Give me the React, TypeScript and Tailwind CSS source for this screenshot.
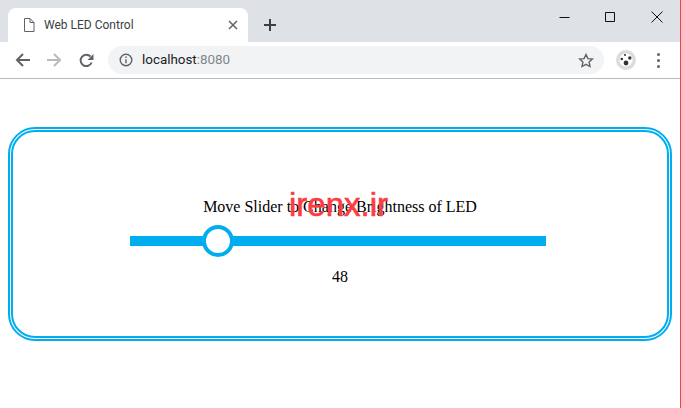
import { useState } from 'react'

function TabStrip() {
  return (
    <div className="flex h-[42px] items-end bg-[#dee1e6] pl-2">
      <div className="relative flex h-[34px] w-[240px] items-center rounded-t-[8px] bg-white pl-[15px] pr-[10px]">
        <svg width="12" height="14" viewBox="0 0 12 14" fill="none" stroke="#5f6368" strokeWidth="1">
          <path d="M1.500 .5h5.500l4 4v9h-9.500z M7 .5v4h4" />
        </svg>
        <span className="ml-[9px] flex-1 font-['Roboto',sans-serif] text-[12px] text-[#3c4043]">Web LED Control</span>
        <svg width="10" height="10" viewBox="0 0 10 10" stroke="#5f6368" strokeWidth="1.500">
          <path d="M1 1l8 8M9 1l-8 8" />
        </svg>
      </div>
      <svg className="mb-[10px] ml-[15px]" width="14" height="14" viewBox="0 0 14 14" stroke="#3c4043" strokeWidth="2">
        <path d="M7 1v12M1 7h12" />
      </svg>
      <div className="mb-[19px] ml-auto flex items-center gap-[35px] pr-[17px]">
        <svg width="11" height="11" viewBox="0 0 11 11" stroke="#111" strokeWidth="1">
          <path d="M.5 5.500h10" />
        </svg>
        <svg width="11" height="11" viewBox="0 0 11 11" fill="none" stroke="#111" strokeWidth="1">
          <path d="M.5 .5h9v9h-9z" />
        </svg>
        <svg width="12" height="12" viewBox="0 0 12 12" stroke="#111" strokeWidth="1">
          <path d="M.5 .5l11 11M11.500 .5l-11 11" />
        </svg>
      </div>
    </div>
  )
}

function Toolbar() {
  return (
    <div className="flex h-[37px] items-center border-b border-[#b8babd] bg-white pl-[15px] pr-[19px]">
      <svg width="15" height="14" viewBox="0 0 15 14" fill="none" stroke="#5f6368" strokeWidth="2">
        <path d="M15 7H2M8 1L2 7l6 6" />
      </svg>
      <svg className="ml-[17px]" width="15" height="14" viewBox="0 0 15 14" fill="none" stroke="#b8babd" strokeWidth="2">
        <path d="M0 7h13M7 1l6 6-6 6" />
      </svg>
      <svg className="ml-[17px]" width="15" height="15" viewBox="0 0 15 15" fill="none">
        <path d="M12.600 9.500A5.700 5.700 0 1 1 11.500 3.500" stroke="#5f6368" strokeWidth="2" />
        <path d="M14.500 1v6h-6z" fill="#5f6368" />
      </svg>
      <div className="ml-[14px] flex h-[28px] w-[496px] items-center rounded-full bg-[#f1f3f4] pl-[11px] pr-[10px]">
        <svg width="14" height="14" viewBox="0 0 14 14" fill="none">
          <circle cx="7" cy="7" r="5.800" stroke="#5f6368" strokeWidth="1.400" />
          <path d="M7 6.200v4M7 3.600v1.400" stroke="#5f6368" strokeWidth="1.400" />
        </svg>
        <span className="ml-[9px] flex-1 font-['Roboto',sans-serif] text-[13.400px] text-[#202124]">
          localhost<span className="text-[#80868b]">:8080</span>
        </span>
        <svg width="16" height="15" viewBox="0 0 16 15" fill="none" stroke="#5f6368" strokeWidth="1.400">
          <path d="M8 1.500l1.900 4.100 4.500.5-3.300 3 .9 4.400L8 11.300l-4 2.200.9-4.400-3.300-3 4.500-.5z" />
        </svg>
      </div>
      <div className="ml-[12px] flex size-[20px] items-center justify-center rounded-full bg-[#dcdcdc]">
        <svg width="14" height="14" viewBox="0 0 14 14">
          <circle cx="7" cy="7" r="6.500" fill="#fff" />
          <circle cx="7" cy="10" r="2.400" fill="#333" />
          <circle cx="2.800" cy="6" r="1.300" fill="#333" />
          <circle cx="10.800" cy="5" r="1.700" fill="#333" />
          <circle cx="6" cy="2" r="1" fill="#333" />
        </svg>
      </div>
      <div className="ml-[21px] flex flex-col gap-[3px]">
        <span className="size-[3px] rounded-full bg-[#5f6368]" />
        <span className="size-[3px] rounded-full bg-[#5f6368]" />
        <span className="size-[3px] rounded-full bg-[#5f6368]" />
      </div>
    </div>
  )
}

export default function App() {
  const [value, setValue] = useState(48)
  // thumb centre sits 88px along the 416px track at the value shown
  const pct = (88 / 416) * 100 * (value / 48)

  return (
    <div className="relative h-[408px] w-[681px] overflow-hidden border-r border-[#e8444c] bg-white">
      <TabStrip />
      <Toolbar />

      <div className="mt-[48px] ml-[8px] flex h-[214px] w-[664px] flex-col items-center rounded-[27px] border-[5px] border-double border-[#00aeef] pt-[66px] font-['Liberation_Serif',serif] text-[16px] text-black">
        <p className="leading-[18px]">Move Slider to Change Brightness of LED</p>
        <div className="relative mr-[4px] mt-[20px] h-[10px] w-[416px] bg-[#00aeef]">
          <div
            className="absolute top-1/2 size-[32px] -translate-x-1/2 -translate-y-1/2 rounded-full border-[4px] border-[#00aeef] bg-white"
            style={{ left: `${pct}%` }}
          />
          <input
            type="range"
            min={0}
            max={227}
            value={value}
            onChange={(e) => setValue(Number(e.target.value))}
            className="absolute inset-0 opacity-0"
          />
        </div>
        <p className="mt-[22px] leading-[18px]">{value}</p>
      </div>

      {/* Watermark over the label */}
      <span className="absolute left-[289px] top-[186px] font-['Liberation_Sans',sans-serif] text-[33px] leading-[38px] text-[#ff3b42] [-webkit-text-stroke:0.6px_#ff3b42]">
        irenx.ir
      </span>
    </div>
  )
}
